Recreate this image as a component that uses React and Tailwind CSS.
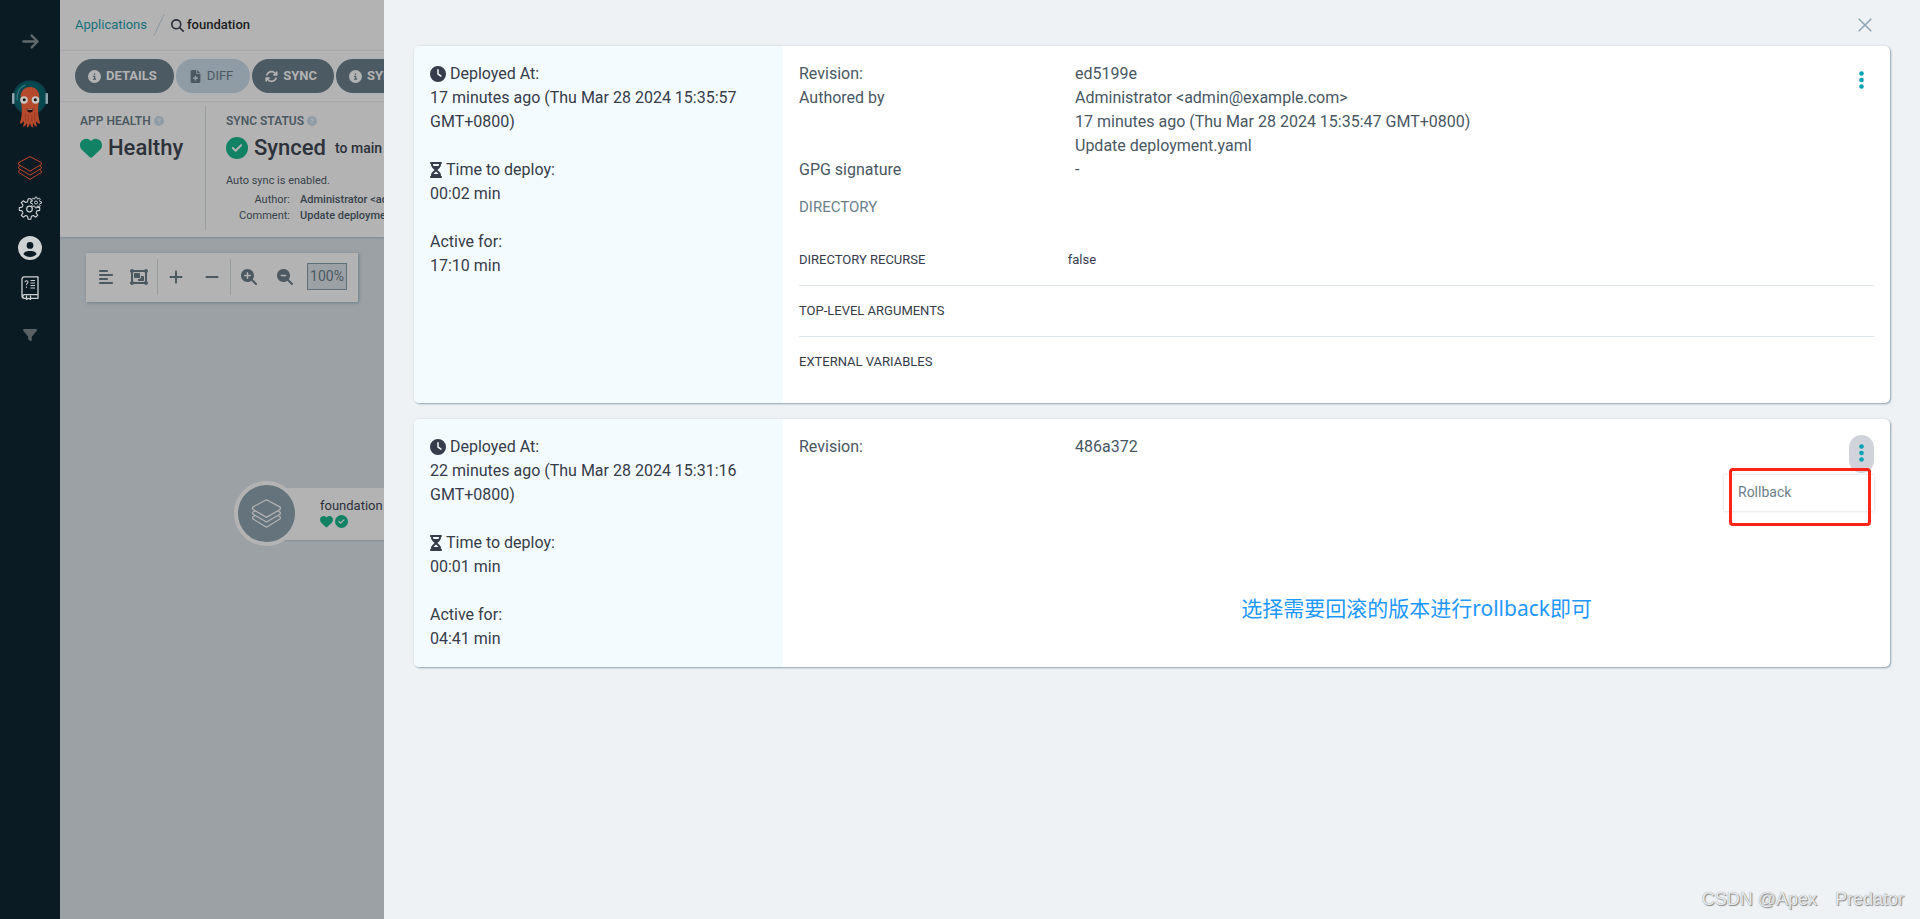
import React from "react";
import {
  FaArrowRight, FaFilter, FaMagnifyingGlass, FaCircleInfo, FaFileMedical, FaArrowsRotate,
  FaCircleQuestion, FaHeart, FaCircleCheck, FaAlignLeft, FaObjectGroup, FaPlus, FaMinus,
  FaMagnifyingGlassPlus, FaMagnifyingGlassMinus, FaClock, FaHourglassHalf, FaCircleUser,
} from "react-icons/fa6";

function StackIcon({ className }) {
  return (
    <svg viewBox="0 0 24 24" className={className} fill="none" stroke="currentColor" strokeWidth="1" strokeLinejoin="round" aria-hidden="true">
      <path d="M12 .6 23.400 6.700v1.800L12 15.200.6 8.500V6.700z" />
      <path d="M2.600 9.700.6 10.900v1.500L12 19.100l11.400-6.700v-1.500l-2-1.200" />
      <path d="M2.600 13.700.6 14.900v1.500L12 23.300l11.400-6.900v-1.500l-2-1.200" />
    </svg>
  );
}

function Octopus() {
  return (
    <svg viewBox="0 0 36 48" className="h-12 w-9" aria-hidden="true">
      <circle cx="18" cy="17.500" r="17.300" fill="#0a3f48" />
      <circle cx="18" cy="17.500" r="15.500" fill="#08494f" />
      <path d="M5 20C4.500 12 8.500 7 13 5" stroke="#2f7f86" strokeWidth="1.100" fill="none" strokeLinecap="round" />
      <rect x="0" y="13" width="2.500" height="11" rx="1" fill="#8ea5ae" />
      <rect x="33.500" y="13" width="2.500" height="11" rx="1" fill="#8ea5ae" />
      <path d="M18 7c-6.300 0-9.300 4.500-9.300 10 0 5 1.300 8 1.200 12 0 6-.6 10-2.200 14.500 2.200 0 3.300-1 4.200-2.600.2 2.500-.3 4-1.200 5.600 2.500.2 3.800-1.800 4.300-4 .3 2 .1 3.500-.3 5 1.800 0 2.900-2 3.300-4.500.4 2.500 1.500 4.500 3.300 4.500-.4-1.500-.6-3-.3-5 .5 2.200 1.800 4.200 4.300 4-.9-1.600-1.400-3.100-1.200-5.600.9 1.600 2 2.600 4.200 2.600-1.600-4.500-2.200-8.500-2.200-14.500-.1-4 1.200-7 1.200-12 0-5.500-3-10-9.300-10z" fill="#b5492c" />
      <path d="M13.500 33v8M16.200 35v7M19.800 35v7M22.800 33v8" stroke="#8e3822" strokeWidth=".7" />
      <circle cx="12" cy="20" r="3.800" fill="#c9c4c1" />
      <circle cx="23.500" cy="20" r="3.800" fill="#c9c4c1" />
      <circle cx="12.200" cy="19.800" r="1.500" fill="#111" />
      <circle cx="23.300" cy="19.800" r="1.500" fill="#111" />
      <path d="M14.500 28.500q3.500 1.500 7 0-.8 4-3.500 4t-3.500-4z" fill="#2a0f0c" />
      <path d="M15.500 28.900q2.500 1 5 0v1.100h-5z" fill="#c9c4c1" />
    </svg>
  );
}

// Outline of a toothed wheel centred on (cx, cy).
function gear(cx, cy, inner, outer, teeth) {
  const step = (Math.PI * 2) / teeth;
  const points = [];
  for (let i = 0; i < teeth; i++) {
    for (const [offset, radius] of [[-0.32, inner], [-0.17, outer], [0.17, outer], [0.32, inner]]) {
      const angle = (i + offset) * step;
      points.push(`${(cx + radius * Math.sin(angle)).toFixed(2)} ${(cy - radius * Math.cos(angle)).toFixed(2)}`);
    }
  }
  return `M${points.join("L")}Z`;
}

function GearsIcon({ className }) {
  return (
    <svg viewBox="0 0 24 24" className={className} fill="none" stroke="currentColor" strokeLinejoin="round" aria-hidden="true">
      <path d={gear(11.500, 13, 7.600, 10.300, 8)} strokeWidth="1.100" />
      <circle cx="11.500" cy="13" r="2.800" strokeWidth="1.200" />
      <path d={gear(18, 6.500, 4, 5.500, 8)} strokeWidth="1" fill="#0a1b24" />
      <circle cx="18" cy="6.500" r="1.500" strokeWidth="1" />
    </svg>
  );
}

function DocsIcon({ className }) {
  return (
    <svg viewBox="0 0 18 24" className={className} fill="none" stroke="currentColor" strokeWidth="1.300" strokeLinejoin="round" aria-hidden="true">
      <path d="M5 22.300H3.200A2.300 2.300 0 0 1 1 20V3a2.200 2.200 0 0 1 2.200-2.200H17v17.800H3.200A1.900 1.900 0 0 0 3.200 22.300M10 22.300h7v-3.700" />
      <path d="M5.500 19.500v4l2-1.200 2 1.200v-4" />
      <path d="M4 6.200c0-2 3-2 3 0 0 1.300-1.500 1.200-1.500 2.700M5.500 10.500v1.200" strokeWidth="1.100" />
      <path d="M9.500 4.500H14M9.500 7H14M9.500 9.500H14M9.500 12H14" strokeWidth="1.100" />
    </svg>
  );
}

function Sidebar() {
  return (
    <nav aria-label="Main" className="flex w-15 shrink-0 flex-col items-center bg-[#0a1b24] pt-8 text-[#b3b3b3]">
      <button aria-label="Expand" className="text-[#62696c]"><FaArrowRight className="size-[19px]" /></button>
      <a href="#home" aria-label="Home" className="mt-[29px]"><Octopus /></a>
      <div className="mt-7 flex flex-col items-center gap-4 text-[#cfd2d3]">
        <a href="#applications" aria-label="Applications" className="text-[#b8472b]"><StackIcon className="size-6" /></a>
        <a href="#settings" aria-label="Settings"><GearsIcon className="size-6" /></a>
        <a href="#user" aria-label="User info"><FaCircleUser className="size-6" /></a>
        <a href="#docs" aria-label="Documentation"><DocsIcon className="h-6 w-[18px]" /></a>
      </div>
      <button aria-label="Filters" className="mt-7 text-[#596165]"><FaFilter className="size-[14px]" /></button>
    </nav>
  );
}

function Pill({ icon: Icon, children, disabled }) {
  return (
    <button
      disabled={disabled}
      className={
        "flex h-[34px] shrink-0 items-center gap-[5px] rounded-full pl-[13px] pr-[17px] text-[13px] " +
        (disabled ? "bg-[#8f9ba5] text-[#4c5961]" : "bg-[#4c5a63] font-bold text-[#b3b3b3]")
      }
    >
      <Icon className="size-[13px]" />
      {children}
    </button>
  );
}

function ToolButton({ label, icon: Icon, wide }) {
  return (
    <button aria-label={label} className="flex size-6 items-center justify-center">
      <Icon className={wide ? "size-[18px]" : "size-4"} />
    </button>
  );
}

function AppView() {
  return (
    <main className="flex min-w-0 flex-1 flex-col overflow-hidden bg-[#9ba1a5] text-[#2c313a]">
      <div className="relative z-10 bg-[#b3b3b3] shadow-[0_1px_2px_#7f888d]">
        <div className="flex h-[51px] items-center border-b border-[#a6a9ab] pl-[15px] text-[13px]">
          <a href="#applications" className="text-[#17717c]">Applications</a>
          <svg viewBox="0 0 12 22" className="ml-[6px] h-[22px] w-3" aria-hidden="true"><path d="M1 21.500 11 .5" stroke="#8c979f" /></svg>
          <FaMagnifyingGlass className="ml-[6px] size-[13px]" />
          <span className="ml-[3px] font-medium text-[#1b1d21]">foundation</span>
        </div>
        <div className="flex h-[51px] items-center gap-[2px] border-b border-[#a6a9ab] pl-[15px]">
          <Pill icon={FaCircleInfo}>DETAILS</Pill>
          <Pill icon={FaFileMedical} disabled>DIFF</Pill>
          <Pill icon={FaArrowsRotate}>SYNC</Pill>
          <Pill icon={FaCircleInfo}>SYNC STATUS</Pill>
        </div>
        <div className="flex h-[135px] whitespace-nowrap pb-[7px] pl-5 pt-1">
          <div className="w-[126px] shrink-0 border-r border-[#989da0] pt-[7px]">
            <h2 className="flex items-center gap-[3px] text-[12px] leading-4 font-semibold text-[#4c5961]">APP HEALTH <FaCircleQuestion className="size-[10px] text-[#8f9ba5]" /></h2>
            <div className="mt-[5px] flex items-center gap-[6px] text-[22px] leading-7 font-medium"><FaHeart className="size-[22px] text-[#118264]" />Healthy</div>
          </div>
          <div className="min-w-0 flex-1 overflow-hidden pl-5 pt-[7px]">
            <h2 className="flex items-center gap-[3px] text-[12px] leading-4 font-semibold text-[#4c5961]">SYNC STATUS <FaCircleQuestion className="size-[10px] text-[#8f9ba5]" /></h2>
            <div className="mt-[5px] flex items-center gap-[6px] text-[22px] leading-7 font-medium">
              <FaCircleCheck className="size-[22px] shrink-0 text-[#118264]" />Synced
              <span className="pl-[3px] text-[14px]">to main</span>
            </div>
            <p className="mt-[9px] text-[11px] leading-5 text-[#38424a]">Auto sync is enabled.</p>
            <dl className="mt-px grid grid-cols-[64px_auto] gap-x-[10px] text-[11px] leading-4 text-[#38424a]">
              <dt className="text-right">Author:</dt><dd className="font-medium">Administrator &lt;admin@example.com&gt;</dd>
              <dt className="text-right">Comment:</dt><dd className="font-medium">Update deployment.yaml</dd>
            </dl>
          </div>
        </div>
      </div>
      <div className="flex-1 pl-[26px] pt-4">
        <div className="flex h-[49px] w-[272px] items-center bg-[#b3b3b3] pb-[2px] text-[#4c5961] shadow-[1px_1px_3px_#6d7f8b]">
          <div className="flex h-9 items-center gap-[9px] border-r border-[#989da0] pl-2 pr-[6px]">
            <ToolButton label="Align" icon={FaAlignLeft} />
            <ToolButton label="Group nodes" icon={FaObjectGroup} wide />
          </div>
          <div className="flex h-9 items-center gap-3 border-r border-[#989da0] px-[6px]">
            <ToolButton label="Expand all" icon={FaPlus} />
            <ToolButton label="Collapse all" icon={FaMinus} />
          </div>
          <div className="flex h-9 items-center gap-3 pl-[6px]">
            <ToolButton label="Zoom in" icon={FaMagnifyingGlassPlus} />
            <ToolButton label="Zoom out" icon={FaMagnifyingGlassMinus} />
            <span className="ml-[-2px] flex h-[27px] w-10 items-center justify-center border border-[#5f707a] bg-[#9ba1a5] text-[14px]">100%</span>
          </div>
        </div>
        <div className="ml-[148px] mt-[179px] flex items-center">
          <div className="z-10 flex size-[65px] shrink-0 items-center justify-center rounded-full border-4 border-[#b3b3b3] bg-[#64737c] text-[#b3b3b3]">
            <StackIcon className="size-[29px]" />
          </div>
          <div className="ml-[-20px] flex h-[52px] w-[260px] shrink-0 flex-col justify-center bg-[#b3b3b3] pb-[2px] pl-[41px] text-[13px] shadow-[1px_1px_1px_#8a949a]">
            <span className="leading-[18px]">foundation</span>
            <span className="flex gap-[2px] text-[#118264]"><FaHeart className="size-[13px]" /><FaCircleCheck className="size-[13px]" /></span>
          </div>
        </div>
      </div>
    </main>
  );
}

function HistoryCard({ ago, deployTime, active, children }) {
  return (
    <article className="flex rounded-[5px] bg-white shadow-[1px_1px_2px_#92a3b0,0_0_2px_#d3dae0]">
      <div className="w-1/4 shrink-0 rounded-l-[5px] bg-[#f4fbfe] p-4 text-[#363c4a]">
        <p className="flex items-center gap-1"><FaClock className="size-4" />Deployed At:</p>
        <p>{ago}</p>
        <p className="mt-6 flex items-center gap-1"><FaHourglassHalf className="h-4 w-3" />Time to deploy:</p>
        <p>{deployTime}</p>
        <p className="mt-6">Active for:</p>
        <p>{active}</p>
      </div>
      <div className="relative min-w-0 flex-1 p-4 text-[#495763]">{children}</div>
    </article>
  );
}

function Detail({ label, children }) {
  return (
    <div className="flex">
      <dt className="w-[276px] shrink-0">{label}</dt>
      <dd>{children}</dd>
    </div>
  );
}

function Kebab({ open }) {
  return (
    <button
      aria-label="Actions"
      className={"absolute right-4 top-4 flex h-[38px] w-[25px] items-center justify-center rounded-full text-[#00a2b3] " + (open ? "bg-[#d0d4da]" : "")}
    >
      <svg viewBox="0 0 5 18" className="mb-[3px] h-[18px] w-[5px]" fill="currentColor" aria-hidden="true">
        <circle cx="2.500" cy="2.500" r="2.300" /><circle cx="2.500" cy="9" r="2.300" /><circle cx="2.500" cy="15.500" r="2.300" />
      </svg>
    </button>
  );
}

const parameters = [
  ["DIRECTORY RECURSE", "false"],
  ["TOP-LEVEL ARGUMENTS", ""],
  ["EXTERNAL VARIABLES", ""],
];

function HistoryPanel() {
  return (
    <section aria-label="History and rollback" className="relative w-4/5 shrink-0 bg-[#eef2f5] px-[30px] text-[16px] leading-6">
      <div className="flex h-[46px] items-center justify-end pr-[18px] pt-1">
        <button aria-label="Close" className="text-[#8fa4b1]">
          <svg viewBox="0 0 14 14" className="size-[14px]" fill="none" stroke="currentColor" strokeWidth="1.500" aria-hidden="true"><path d="m.7.7 12.600 12.600M13.300.7.7 13.300" /></svg>
        </button>
      </div>
      <div className="flex flex-col gap-4">
        <HistoryCard ago="17 minutes ago (Thu Mar 28 2024 15:35:57 GMT+0800)" deployTime="00:02 min" active="17:10 min">
          <dl>
            <Detail label="Revision:">ed5199e</Detail>
            <Detail label="Authored by">
              Administrator &lt;admin@example.com&gt;<br />
              17 minutes ago (Thu Mar 28 2024 15:35:47 GMT+0800)<br />
              Update deployment.yaml
            </Detail>
            <Detail label="GPG signature">-</Detail>
          </dl>
          <h3 className="mb-4 mt-[13px] text-[15px] text-[#6d7f8b]">DIRECTORY</h3>
          <table className="w-full table-fixed border-separate border-spacing-0 text-left text-[13px] text-[#363c4a]">
            <tbody>
              {parameters.map(([name, value]) => (
                <tr key={name} className="group">
                  <th scope="row" className="h-[51px] w-1/4 border-b border-[#dee6eb] p-0 font-normal group-last:h-[50px] group-last:border-0">{name}</th>
                  <td className="border-b border-[#dee6eb] p-0 group-last:border-0">{value}</td>
                </tr>
              ))}
            </tbody>
          </table>
          <Kebab />
        </HistoryCard>
        <HistoryCard ago="22 minutes ago (Thu Mar 28 2024 15:31:16 GMT+0800)" deployTime="00:01 min" active="04:41 min">
          <dl><Detail label="Revision:">486a372</Detail></dl>
          <Kebab open />
          <div role="menu" className="absolute right-4 top-14 w-[150px] bg-white shadow-[0_0_3px_#ccd2d6]">
            <button role="menuitem" className="h-9 w-full px-[14px] pb-[2px] text-left text-[14px] text-[#6d7f8b]">Rollback</button>
          </div>
          <div className="absolute right-[19px] top-[49px] h-[58px] w-[142px] rounded-[4px] border-[3px] border-[#ff2318]" />
          <p className="absolute right-[298px] top-[177px] whitespace-nowrap font-['Noto_Sans','Noto_Sans_CJK_SC',sans-serif] text-[21px] text-[#1e98ff]">选择需要回滚的版本进行rollback即可</p>
        </HistoryCard>
      </div>
      <p className="absolute bottom-2 right-4 whitespace-pre font-['Liberation_Sans','Noto_Sans_CJK_SC',sans-serif] text-[18px] text-[#e6e9eb] [text-shadow:1px_1px_1px_#888,0_0_1px_#999]">CSDN @Apex　Predator</p>
    </section>
  );
}

export default function App() {
  return (
    <div className="flex min-h-screen font-[Roboto,sans-serif]">
      <Sidebar />
      <AppView />
      <HistoryPanel />
    </div>
  );
}
